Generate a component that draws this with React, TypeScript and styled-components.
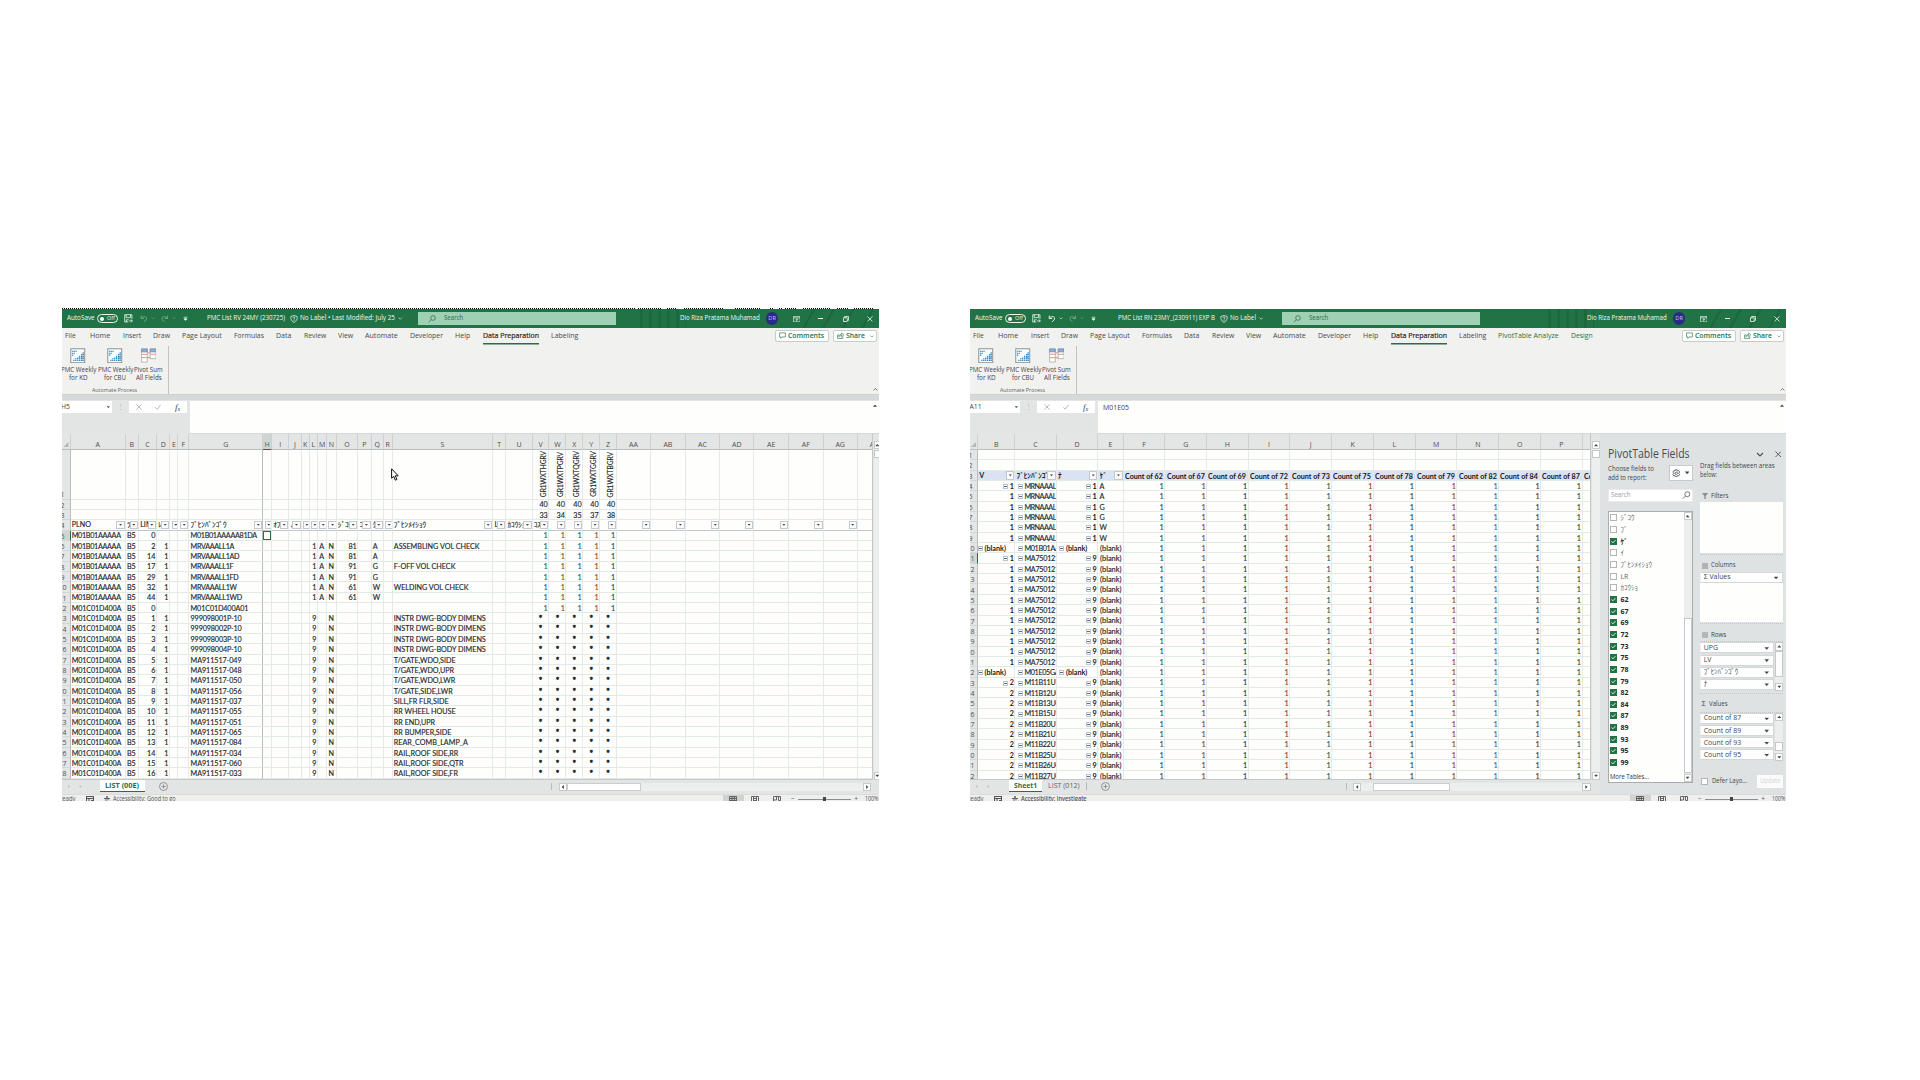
import React, { useLayoutEffect, useRef, useState } from 'react';
import styled, { createGlobalStyle, css } from 'styled-components';

const UI = `"Open Sans", "Noto Sans", "Noto Sans CJK JP", sans-serif`;
const CELL = `Lato, "Open Sans", "Noto Sans CJK JP", sans-serif`;

const Global = createGlobalStyle`
  * { box-sizing: border-box; }
  html, body { margin: 0; background: #fff; }
  body { width: 1920px; height: 1080px; overflow: hidden; font-family: ${UI}; font-size: 7.4px; line-height: 1; color: #444; }
`;

const Stage = styled.main`
  display: flex;
  gap: 91px;
  align-items: flex-start;
  padding: 308px 0 0 62px;
  height: 1080px;
`;

const Window = styled.section<{ $w: number; $top: number }>`
  flex: 0 0 ${p => p.$w}px;
  height: ${p => 493 - p.$top}px;
  margin-top: ${p => p.$top}px;
  overflow: hidden;
  display: flex;
  flex-direction: column;
  background: #e3e5e5;
  position: relative;
`;

/* ---------- text stretched to a known width ---------- */
const FitSpan = styled.span`
  display: inline-block;
  white-space: nowrap;
  transform-origin: 0 50%;
`;
const FitBox = styled.span<{ $w: number }>`
  display: block;
  flex: none;
  width: ${p => p.$w}px;
  white-space: nowrap;
`;
function Fit({ w, children }: { w: number; children: React.ReactNode }) {
  const ref = useRef<HTMLSpanElement>(null);
  const [k, setK] = useState(1);
  useLayoutEffect(() => {
    const n = ref.current?.getBoundingClientRect().width;
    if (n) setK(w / n);
  }, [w]);
  return (
    <FitBox $w={w}>
      <FitSpan ref={ref} style={{ transform: `scaleX(${k})` }}>{children}</FitSpan>
    </FitBox>
  );
}

/* ---------- title bar ---------- */
const DotLine = styled.div`
  display: flex;
  flex: 0 0 1px;
  height: 1px;
  background: #fff;
`;
const Dots = styled.i<{ $w: number; $gap: number }>`
  flex: 0 0 ${p => p.$w}px;
  margin-left: ${p => p.$gap}px;
  height: 1px;
  background: repeating-linear-gradient(90deg, #000 0 1px, #fff 1px 2px);
`;
const TitleBar = styled.header`
  flex: 0 0 18.5px;
  display: flex;
  align-items: center;
  padding-top: .8px;
  color: #f1faf5;
  font-size: 6.9px;
  background:
    repeating-linear-gradient(120deg, transparent 0 9px, rgba(10, 70, 38, .28) 9px 11px, transparent 11px 17px) right / 76px 100% no-repeat,
    repeating-linear-gradient(90deg, transparent 0 6px, rgba(10, 70, 38, .22) 6px 9px) 572px 0 / 52px 100% no-repeat,
    #217346;
`;
const Slot = styled.span<{ $l: number; $w?: number; $dim?: boolean }>`
  flex: 0 0 ${p => (p.$w ? `${p.$w}px` : 'auto')};
  margin-left: ${p => p.$l}px;
  display: flex;
  align-items: center;
  justify-content: center;
  opacity: ${p => (p.$dim ? 0.4 : 1)};
  svg { display: block; width: 100%; }
`;
const Toggle = styled.span`
  width: 21px;
  height: 8.6px;
  border: 1px solid #e9f5ee;
  border-radius: 5px;
  display: flex;
  align-items: center;
  gap: 3px;
  padding-left: 2px;
  font-size: 5.4px;
  &::before { content: ''; width: 4px; height: 4px; border-radius: 50%; background: #fff; }
`;
const SearchBox = styled.span<{ $l: number; $w: number }>`
  flex: 0 0 ${p => p.$w}px;
  margin-left: ${p => p.$l}px;
  height: 13.4px;
  background: #9fd0b3;
  color: #2b6b47;
  display: flex;
  align-items: center;
  svg { width: 8px; margin: 0 8px 0 10.6px; }
`;
const Avatar = styled.span`
  width: 12.4px;
  height: 12.4px;
  border-radius: 50%;
  background: #2b2a86;
  color: #c9c6ee;
  font-size: 5.6px;
  display: flex;
  align-items: center;
  justify-content: center;
`;

const line = { fill: 'none', stroke: 'currentColor', strokeWidth: 1.1 } as const;
const Chevron = () => <svg viewBox="0 0 8 5" {...line}><path d="M1 1l3 3 3-3" /></svg>;
const SaveIcon = () => (
  <svg viewBox="0 0 12 12" {...line}><path d="M1 1h10v6M1 1v10h5M3 1v4h6V1M3.5 11V8h3M7 9.5h4.5M9.5 7.5l2 2-2 2" /></svg>
);
const UndoIcon = () => <svg viewBox="0 0 12 12" {...line} strokeWidth={1.5}><path d="M2 1v4.5h4.5M2 5.500C4 2 10 1.500 10.500 5c.3 2.500-2 4-4.500 6.500" /></svg>;
const RedoIcon = () => <svg viewBox="0 0 12 12" {...line} strokeWidth={1.5}><path d="M10 1v4.5H5.500M10 5.500C8 2 2 1.500 1.500 5c-.3 2.500 2 4 4.500 6.500" /></svg>;
const CustomizeIcon = () => <svg viewBox="0 0 8 8" {...line}><path d="M1 2h6M1.500 4.500h5L4 7z" fill="currentColor" /></svg>;
const ShieldIcon = () => (
  <svg viewBox="0 0 12 12" {...line}><path d="M6 .8l4.800 1.400c.3 4-1 7-4.800 9C2.200 9.200.9 6.200 1.200 2.200z" /><path d="M4.300 4.300c.5-1.600 3.400-1.300 3.200.2C7.300 5.500 6 5.500 6 7M6 8v1" /></svg>
);
const LensIcon = () => <svg viewBox="0 0 12 12" {...line}><circle cx="7.500" cy="4.500" r="3.500" /><path d="M5 7l-4 4" /></svg>;
const RibbonIcon = () => <svg viewBox="0 0 12 10" {...line}><path d="M.6.6h10.800v8.800H.6zM.6 3h10.800M6 8.500V4.600M4 6.300l2-1.800 2 1.800" /></svg>;
const MinIcon = () => <svg viewBox="0 0 8 8" {...line}><path d="M0 4h8" strokeWidth={1.5} /></svg>;
const RestoreIcon = () => <svg viewBox="0 0 8 8" {...line}><path d="M.6 2.400h5v5h-5zM2.200 2.200V.6h5.200v5.200H5.800" /></svg>;
const CloseIcon = () => <svg viewBox="0 0 8 8" {...line}><path d="M.5.5l7 7M7.500.5l-7 7" /></svg>;

interface Doc {
  title: string; titleW: number; titleL: number;
  label: string; labelW: number;
  searchL: number; nameL: number; undo: boolean;
}
function Title({ d }: { d: Doc }) {
  return (
    <TitleBar>
      <Slot $l={4.7}><Fit w={27.6}>AutoSave</Fit></Slot>
      <Slot $l={2.7} $w={21}><Toggle>Off</Toggle></Slot>
      <Slot $l={6.3} $w={8.7}><SaveIcon /></Slot>
      <Slot $l={7} $w={7.500} $dim={!d.undo}><UndoIcon /></Slot>
      <Slot $l={4} $w={4} $dim={!d.undo}><Chevron /></Slot>
      <Slot $l={5.5} $w={7.700} $dim><RedoIcon /></Slot>
      <Slot $l={3} $w={4} $dim><Chevron /></Slot>
      <Slot $l={7} $w={5}><CustomizeIcon /></Slot>
      <Slot $l={d.titleL}><Fit w={d.titleW}>{d.title}</Fit></Slot>
      <Slot $l={4.8} $w={8}><ShieldIcon /></Slot>
      <Slot $l={2.2}><Fit w={d.labelW}>{d.label}</Fit></Slot>
      <Slot $l={3} $w={4.500}><Chevron /></Slot>
      <SearchBox $l={d.searchL} $w={198.500}><LensIcon /><Fit w={19.300}>Search</Fit></SearchBox>
      <Slot $l={d.nameL}><Fit w={79.700}>Dio Riza Pratama Muhamad</Fit></Slot>
      <Slot $l={6} $w={12.4}><Avatar>DR</Avatar></Slot>
      <Slot $l={14.500} $w={7.500}><RibbonIcon /></Slot>
      <Slot $l={18} $w={5}><MinIcon /></Slot>
      <Slot $l={19.700} $w={6}><RestoreIcon /></Slot>
      <Slot $l={18.200} $w={5.800}><CloseIcon /></Slot>
    </TitleBar>
  );
}

/* ---------- ribbon ---------- */
const TabRow = styled.nav`
  flex: 0 0 17px;
  display: flex;
  align-items: center;
  gap: 12.1px;
  padding-left: 2.6px;
  background: #f1f1f0;
  font-size: 7.6px;
  color: #4a4a4a;
`;
const Tab = styled.span<{ $active?: boolean; $green?: boolean; $first?: boolean }>`
  height: 13.5px;
  display: flex;
  align-items: center;
  ${p => p.$first && css`padding-right: 3px;`}
  ${p => p.$green && css`color: #217346;`}
  ${p => p.$active && css`color: #262626; -webkit-text-stroke: .2px #262626; box-shadow: 0 1.500px #217346;`}
`;
const TabButtons = styled.span`
  margin-left: auto;
  display: flex;
  gap: 4.3px;
  padding-right: 2.3px;
`;
const OutlineButton = styled.span<{ $w: number }>`
  width: ${p => p.$w}px;
  height: 12.3px;
  background: #fff;
  border: 1px solid #c9cdca;
  border-radius: 2px;
  color: #217346;
  font-weight: 600;
  font-size: 7.2px;
  display: flex;
  align-items: center;
  padding-left: 3px;
  gap: 2.200px;
  svg { width: 7px; flex: none; }
  svg:last-child { width: 4px; margin-left: 3px; }
`;
const TABS: [string, number][] = [
  ['File', 10.7], ['Home', 20.3], ['Insert', 18.3], ['Draw', 17], ['Page Layout', 39.7], ['Formulas', 30],
  ['Data', 15.3], ['Review', 22.3], ['View', 15.3], ['Automate', 32.7], ['Developer', 33], ['Help', 15.3],
  ['Data Preparation', 56], ['Labeling', 27.4],
];
function Tabs({ extra }: { extra?: boolean }) {
  return (
    <TabRow>
      {TABS.map(([t, w], i) => <Tab key={t} $first={i === 0} $active={t === 'Data Preparation'}><Fit w={w}>{t}</Fit></Tab>)}
      {extra && <Tab $green><Fit w={60.6}>PivotTable Analyze</Fit></Tab>}
      {extra && <Tab $green><Fit w={21.6}>Design</Fit></Tab>}
      <TabButtons>
        <OutlineButton $w={54.300}>
          <svg viewBox="0 0 12 12" {...line}><path d="M1 1.500h10v7H5L3 10.800V8.500H1z" /></svg>
          <Fit w={36}>Comments</Fit>
        </OutlineButton>
        <OutlineButton $w={43.600}>
          <svg viewBox="0 0 12 12" {...line}><path d="M3.500 5H1v6h9V8M3 8c.5-3 2.500-4 5-4V1.500l3.500 3.500L8 8.200V6C6 6 4.500 6.500 3 8z" /></svg>
          <Fit w={19}>Share</Fit>
          <Chevron />
        </OutlineButton>
      </TabButtons>
    </TabRow>
  );
}

const RibbonBox = styled.div`
  flex: 0 0 50.5px;
  display: flex;
  background: #f1f1f0;
  border-bottom: 1px solid #cfd1d2;
`;
const Group = styled.div`
  width: 108px;
  height: 48px;
  margin-left: -1.3px;
  margin-top: 1px;
  border-right: 1px solid #c2c3c4;
  display: flex;
  flex-direction: column;
  align-items: center;
`;
const BigButtons = styled.div`
  display: flex;
  align-self: flex-start;
  gap: 1.500px;
`;
const BigButton = styled.div`
  display: flex;
  flex-direction: column;
  align-items: center;
  font-size: 6.900px;
  line-height: 8.700px;
  svg { width: 15.500px; height: 15.500px; margin: 2px .8px 2.500px 0; }
`;
const GroupName = styled.div`
  font-size: 5.8px;
  color: #5c5c5c;
  margin-top: 5.200px;
`;
const CollapseMark = styled.span`
  margin: 41.500px 1.500px 0 auto;
  width: 5px;
  transform: scaleY(-1);
  height: 5px;
  svg { display: block; }
`;
const MacroIcon = () => (
  <svg viewBox="0 0 16 16">
    <rect x=".8" y=".8" width="14.400" height="14.400" fill="#fafcfd" stroke="#8b8f93" />
    <path d="M2 3.500h5M2 5.500h3M2 7.500h1.500" stroke="#4c9fd0" strokeWidth="1.400" strokeDasharray="1.400 .4" />
    <path d="M4 13.500v-2M6 13.500v-3M8 13.500v-4M10 13.500v-6M12 13.500V6M13.600 13.500V4" stroke="#2f86c3" strokeWidth="1.300" strokeDasharray="1.500 .4" />
  </svg>
);
const PivotIcon = () => (
  <svg viewBox="0 0 16 16" fill="none">
    <path d="M.5 1h6v13.500h-6z" fill="#fff" stroke="#a9a9a9" strokeWidth=".8" />
    <path d="M9.500 1h6v10h-6z" fill="#fff" stroke="#a9a9a9" strokeWidth=".8" />
    <path d="M.5 1h6v3h-6zM9.500 1h6v3h-6z" fill="#8fb0d6" stroke="#6f8fb8" strokeWidth=".8" />
    <path d="M.8 6.500h5.500M.8 10h5.500M9.800 6.500h5.500" stroke="#d58a6c" strokeWidth=".9" />
    <path d="M6.500 5h3M6.500 10h3" stroke="#d58a6c" strokeWidth=".9" />
  </svg>
);
function Ribbon() {
  return (
    <RibbonBox>
      <Group>
        <BigButtons>
          <BigButton><MacroIcon /><Fit w={35.400}>PMC Weekly</Fit><Fit w={18.600}>for KD</Fit></BigButton>
          <BigButton><MacroIcon /><Fit w={35.400}>PMC Weekly</Fit><Fit w={21.800}>for CBU</Fit></BigButton>
          <BigButton><PivotIcon /><Fit w={28.600}>Pivot Sum</Fit><Fit w={25.800}>All Fields</Fit></BigButton>
        </BigButtons>
        <GroupName><Fit w={45}>Automate Process</Fit></GroupName>
      </Group>
      <CollapseMark><Chevron /></CollapseMark>
    </RibbonBox>
  );
}

/* ---------- formula bar ---------- */
const FormulaRow = styled.div`
  flex: 0 0 39px;
  display: flex;
  padding-top: 6px;
  background: linear-gradient(#d6d8da 0 5px, #e3e5e5 5px);
`;
const NameBox = styled.div`
  flex: 0 0 50px;
  height: 12px;
  background: #fff;
  display: flex;
  align-items: center;
  justify-content: space-between;
  padding-right: 2px;
  font-size: 6.900px;
  overflow: hidden;
`;
const NameText = styled.span<{ $shift: number }>`margin-left: ${p => p.$shift}px;`;
const Grip = styled.div`
  flex: 0 0 17px;
  height: 12px;
  display: flex;
  align-items: center;
  justify-content: center;
  color: #a5a8a8;
`;
const FxBox = styled.div`
  flex: 0 0 58px;
  height: 12px;
  background: #fff;
  display: flex;
  align-items: center;
  justify-content: space-around;
  color: #a9acac;
  svg { width: 6px; }
`;
const Fx = styled.em`
  font: italic 400 9px "Liberation Serif", serif;
  color: #444;
  sub { font-size: 6px; vertical-align: -1px; }
`;
const FormulaText = styled.div`
  flex: 1;
  margin-left: 3px;
  height: 33px;
  background: #fefefd;
  padding: 2.800px 2px 0 5px;
  font-size: 7px;
  display: flex;
  justify-content: space-between;
  border-bottom: 1px solid #d4d7d7;
`;
const Tri = styled.i<{ $dir: 'up' | 'down' | 'left' | 'right'; $s?: number; $soft?: boolean }>`
  flex: none;
  width: ${p => (p.$s ?? 2) * 2}px;
  height: ${p => (p.$s ?? 2) * 2}px;
  background: ${p => (p.$soft ? '#b3b7b7' : '#444')};
  clip-path: ${p => ({
    up: 'polygon(0 75%, 100% 75%, 50% 20%)',
    down: 'polygon(0 25%, 100% 25%, 50% 80%)',
    left: 'polygon(75% 0, 75% 100%, 20% 50%)',
    right: 'polygon(25% 0, 25% 100%, 80% 50%)',
  }[p.$dir])};
`;
function Formula({ name, shift, value }: { name: string; shift: number; value: string }) {
  return (
    <FormulaRow>
      <NameBox><NameText $shift={shift}>{name}</NameText><Tri $dir="down" $s={1.700} /></NameBox>
      <Grip>⋮</Grip>
      <FxBox><CloseIcon /><svg viewBox="0 0 8 8" {...line}><path d="M.5 4.500l2.500 2.500 4.500-6" /></svg><Fx>f<sub>x</sub></Fx></FxBox>
      <FormulaText><Fit w={value ? 26 : 0}>{value}</Fit><Tri $dir="up" /></FormulaText>
    </FormulaRow>
  );
}

/* ---------- grid ---------- */
const Body = styled.div`
  flex: 0 0 359.500px;
  display: flex;
  background: #e3e5e5;
`;
const SheetSide = styled.div<{ $w?: number }>`
  flex: ${p => (p.$w ? `0 0 ${p.$w}px` : '1')};
  display: flex;
  flex-direction: column;
  min-width: 0;
`;
const GridAndScroll = styled.div`
  flex: 0 0 346px;
  display: flex;
  overflow: hidden;
`;
const Grid = styled.div<{ $w: number }>`
  flex: 0 0 ${p => p.$w}px;
  overflow: hidden;
  background: #fefefd;
  border-right: 1px solid #c3c8c8;
  border-bottom: 1px solid #c3c8c8;
  display: flex;
  flex-direction: column;
`;
const Row = styled.div<{ $h: number; $tint?: boolean }>`
  flex: 0 0 ${p => p.$h}px;
  display: flex;
  background: ${p => (p.$tint ? '#dae3f3' : 'transparent')};
`;
const HeadCell = styled.div<{ $w: number; $sel?: boolean; $cut?: boolean }>`
  flex: 0 0 ${p => p.$w}px;
  display: flex;
  align-items: center;
  justify-content: ${p => (p.$cut ? 'flex-start' : 'center')};
  padding-top: 6px;
  padding-left: ${p => (p.$cut ? 12 : 0)}px;
  overflow: hidden;
  font-size: 7px;
  color: ${p => (p.$sel ? '#217346' : '#4d4d4d')};
  background: ${p => (p.$sel ? '#d0d4d2' : '#e4e6e6')};
  border-right: 1px solid #cdd1d1;
  border-bottom: 1px solid ${p => (p.$sel ? '#217346' : '#b9bdbd')};
`;
const Corner = styled(HeadCell)`
  justify-content: flex-end;
  padding: 6px 1px 0 0;
  &::after { content: ''; width: 5px; height: 5px; background: #b4b8b8; clip-path: polygon(100% 0, 100% 100%, 0 100%); }
`;
const RowHead = styled.div<{ $w: number; $sel?: boolean }>`
  flex: 0 0 ${p => p.$w}px;
  overflow: hidden;
  display: flex;
  align-items: flex-end;
  padding-bottom: .3px;
  font-size: 7px;
  color: ${p => (p.$sel ? '#217346' : '#4d4d4d')};
  background: ${p => (p.$sel ? '#d0d4d2' : '#e4e6e6')};
  border-right: 1px solid ${p => (p.$sel ? '#217346' : '#b9bdbd')};
  border-bottom: 1px solid #d3d6d6;
  span { flex: none; width: 15px; margin-left: -7px; text-align: center; }
`;
const Cell = styled.div<{ $w: number; $right?: boolean; $center?: boolean; $bold?: boolean; $c?: string; $frozen?: boolean; $strong?: boolean; $sel?: boolean; $pad?: number; $tight?: number; $plain?: boolean; $star?: boolean }>`
  flex: 0 0 ${p => p.$w}px;
  min-width: 0;
  overflow: hidden;
  display: flex;
  align-items: center;
  justify-content: ${p => (p.$right ? 'flex-end' : p.$center ? 'center' : 'flex-start')};
  padding: ${p => (p.$plain ? 0 : 1.600)}px ${p => (p.$right ? p.$pad ?? 0.6 : 0)}px 0 ${p => (p.$right ? 0 : p.$center ? 0 : p.$pad ?? 1.200)}px;
  white-space: nowrap;
  font-family: ${CELL};
  font-size: 7.200px;
  letter-spacing: ${p => -(p.$tight ?? 0)}px;
  font-weight: ${p => (p.$bold ? 700 : 400)};
  color: ${p => p.$c ?? '#25292d'};
  -webkit-text-stroke: ${p => (p.$star ? 0.6 : p.$bold ? 0 : 0.15)}px currentColor;
  border-right: 1px solid ${p => (p.$frozen ? '#b9bdbd' : '#e6eae8')};
  border-bottom: 1px solid ${p => (p.$strong ? '#c4c9c8' : '#e2eae6')};
  ${p => p.$sel && css`box-shadow: inset 0 0 0 1px #217346;`}
`;
const Clip = styled.span`
  flex: 1 1 0;
  min-width: 0;
  overflow: hidden;
  white-space: nowrap;
  line-height: 9px;
`;
const FilterBox = styled.i`
  flex: 0 0 8.300px;
  height: 8.300px;
  margin-left: auto;
  background: #fbfbfc;
  border: 1px solid #c3c8d2;
  display: flex;
  align-items: center;
  justify-content: center;
`;
const Turned = styled.span`
  flex: none;
  writing-mode: vertical-rl;
  transform: rotate(180deg);
  font-size: 6.700px;
  letter-spacing: -.06px;
  white-space: nowrap;
  margin-left: 5px;
`;
const Minus = styled.i`
  flex: 0 0 5px;
  height: 5px;
  margin-right: 1.500px;
  border: 1px solid #b9c4d4;
  background: linear-gradient(#5b6f8c, #5b6f8c) center / 3px 1px no-repeat #fff;
`;
const ScrollV = styled.div<{ $w: number; $gap: number }>`
  flex: 0 0 ${p => p.$w}px;
  margin-left: ${p => p.$gap}px;
  padding-top: 7px;
  display: flex;
  flex-direction: column;
  background: linear-gradient(#e3e5e5 7px, #ecefee 7px);
`;
const ScrollButton = styled.i<{ $end?: boolean }>`
  flex: 0 0 8.300px;
  min-width: 7.500px;
  background: #fff;
  border: 1px solid #c7cbcb;
  display: flex;
  align-items: center;
  justify-content: center;
  margin-top: ${p => (p.$end ? 'auto' : 0)};
`;
const Thumb = styled.i<{ $h: number; $top?: number }>`
  flex: 0 0 ${p => p.$h}px;
  margin-top: ${p => p.$top ?? 0}px;
  background: #fff;
  border: 1px solid #c3c8c8;
`;
const VScroll = ({ w, gap }: { w: number; gap: number }) => (
  <ScrollV $w={w} $gap={gap}>
    <ScrollButton><Tri $dir="up" /></ScrollButton>
    <Thumb $h={8} $top={1} />
    <ScrollButton $end><Tri $dir="down" /></ScrollButton>
  </ScrollV>
);

const widths = (edges: number[]) => edges.slice(1).map((e, i) => Math.round((e - edges[i]) * 100) / 100);
const L_EDGES = [70.5, 125.7, 139, 157, 170.4, 178.5, 189.4, 263.5, 272, 289.4, 301.7, 309.7, 318, 327.3, 336.7, 358.4, 371.7, 384, 392.7, 493.4, 506.4, 532.7, 549.5, 566.6, 583.3, 600.3, 617, 651.4, 685.7, 720.6, 754.4, 789.3, 823.7, 858, 873];
const L_W = widths(L_EDGES);
const L_COLS = 'A B C D E F G H I J K L M N O P Q R S T U V W X Y Z AA AB AC AD AE AF AG AH'.split(' ');
const FILTER_TEXT: Record<string, string> = { A: 'PLNO', B: 'ﾗｲﾝ', C: 'LINE', D: 'ﾚﾍﾞ', F: 'ﾖｳ', G: 'ﾌﾞﾋﾝﾊﾞﾝｺﾞｳ', I: 'ｵﾌﾟｼｮ', J: 'ﾉｳ', O: 'ｼﾞｺｳ', P: 'ｺｳ', Q: 'ｸﾐ', S: 'ﾌﾞﾋﾝﾒｲｼｮｳ', T: 'LR', U: 'ｶｺｳｼｮ', V: 'ｺｽﾄ' };
const VZ = ['V', 'W', 'X', 'Y', 'Z'];
const ONE_COLORS: Record<string, string> = { V: '#1f5c70', W: '#8a4634', X: '#1f5c70', Y: '#9a4226', Z: '#1c5266' };
const RIGHT_COLS = new Set(['C', 'D', 'L', 'O', ...VZ]);

type Rec = Record<string, string>;
const first: Rec[] = ([
  ['0', '', 'M01B01AAAAA81DA', '', '', ''],
  ['2', '1', 'MRVAAALL1A', '81', 'A', 'ASSEMBLING VOL CHECK'],
  ['14', '1', 'MRVAAALL1AD', '81', 'A', ''],
  ['17', '1', 'MRVAAALL1F', '91', 'G', 'F-OFF VOL CHECK'],
  ['29', '1', 'MRVAAALL1FD', '91', 'G', ''],
  ['32', '1', 'MRVAAALL1W', '61', 'W', 'WELDING VOL CHECK'],
  ['44', '1', 'MRVAAALL1WD', '61', 'W', ''],
] as string[][]).map(([C, D, G, O, Q, S]) => ({ A: 'M01B01AAAAA', B: 'B5', C, D, G, O, Q, S, ...(D ? { L: '1', M: 'A', N: 'N' } : {}), V: '1', W: '1', X: '1', Y: '1', Z: '1' }));
const second: Rec[] = ([
  ['999098001P-10', 'INSTR DWG-BODY DIMENS'], ['999098002P-10', 'INSTR DWG-BODY DIMENS'],
  ['999098003P-10', 'INSTR DWG-BODY DIMENS'], ['999098004P-10', 'INSTR DWG-BODY DIMENS'],
  ['MA911517-049', 'T/GATE,WDO,SIDE'], ['MA911517-048', 'T/GATE,WDO,UPR'], ['MA911517-050', 'T/GATE,WDO,LWR'],
  ['MA911517-056', 'T/GATE,SIDE,LWR'], ['MA911517-037', 'SILL,FR FLR,SIDE'], ['MA911517-055', 'RR WHEEL HOUSE'],
  ['MA911517-051', 'RR END,UPR'], ['MA911517-065', 'RR BUMPER,SIDE'], ['MA911517-084', 'REAR_COMB_LAMP_A'],
  ['MA911517-034', 'RAIL,ROOF SIDE,RR'], ['MA911517-060', 'RAIL,ROOF SIDE,QTR'], ['MA911517-033', 'RAIL,ROOF SIDE,FR'],
] as string[][]).map(([G, S], i) => ({ A: 'M01C01D400A', B: 'B5', C: String(i + 1), D: '1', G, L: '9', N: 'N', S, V: '*', W: '*', X: '*', Y: '*', Z: '*' }));
const L_DATA: Rec[] = [
  ...first,
  { A: 'M01C01D400A', B: 'B5', C: '0', G: 'M01C01D400A01', V: '1', W: '1', X: '1', Y: '1', Z: '1' },
  ...second,
];
const HEAD3: Rec = { V: '33', W: '34', X: '35', Y: '37', Z: '38' };
const TURNED: Rec = { V: 'GR1WXTHGRV', W: 'GR1WXTPGRV', X: 'GR1WXTQGRV', Y: 'GR1WXTGGRV', Z: 'GR1WXTBGRV' };
const tightness = (col: string, text = '') => {
  if (col !== 'A' && col !== 'G') return 0;
  return /AAA/.test(text) ? 0.3 : /^MA/.test(text) ? 0.06 : 0.12;
};
const ROW_H = 10.35;

function LeftGrid() {
  return (
    <Grid $w={810.500}>
      <Row $h={16}>
        <Corner $w={8.500} />
        {L_COLS.map((c, i) => <HeadCell key={c} $w={L_W[i]} $sel={c === 'H'} $cut={c === 'AH'}>{c}</HeadCell>)}
      </Row>
      <Row $h={49.500}>
        <RowHead $w={8.500}><span>1</span></RowHead>
        {L_COLS.map((c, i) => <Cell key={c} $w={L_W[i]} $center $plain $frozen={c === 'G'}>{TURNED[c] && <Turned>{TURNED[c]}</Turned>}</Cell>)}
      </Row>
      {[2, 3].map(r => (
        <Row key={r} $h={ROW_H}>
          <RowHead $w={8.500}><span>{r}</span></RowHead>
          {L_COLS.map((c, i) => <Cell key={c} $w={L_W[i]} $right $frozen={c === 'G'}>{VZ.includes(c) ? (r === 2 ? '40' : HEAD3[c]) : ''}</Cell>)}
        </Row>
      ))}
      <Row $h={ROW_H}>
        <RowHead $w={8.500}><span>4</span></RowHead>
        {L_COLS.map((c, i) => (
          <Cell key={c} $w={L_W[i]} $frozen={c === 'G'} $strong $plain>
            {FILTER_TEXT[c] && <Clip>{FILTER_TEXT[c]}</Clip>}
            {c !== 'AH' && <FilterBox><Tri $dir="down" $s={1.500} /></FilterBox>}
          </Cell>
        ))}
      </Row>
      {L_DATA.map((d, r) => (
        <Row key={r} $h={ROW_H}>
          <RowHead $w={8.500} $sel={r === 0}><span>{r + 5}</span></RowHead>
          {L_COLS.map((c, i) => (
            <Cell key={c} $w={L_W[i]} $frozen={c === 'G'} $sel={c === 'H' && r === 0} $tight={tightness(c, d[c])}
              $right={RIGHT_COLS.has(c) && d[c] !== '*'} $center={d[c] === '*'} $star={d[c] === '*'} $pad={c === 'D' ? 1 : undefined}
              $c={d[c] === '1' ? ONE_COLORS[c] : undefined} $bold={d[c] === '*'}>{d[c]}</Cell>
          ))}
        </Row>
      ))}
    </Grid>
  );
}

const R_EDGES = [978, 1015.4, 1056.7, 1098.4, 1123.6, 1165.4, 1207.3, 1248.7, 1290.4, 1332.3, 1374, 1415.7, 1457.6, 1499.3, 1541.3, 1582.7, 1591.5];
const R_W = widths(R_EDGES);
const R_COLS = ['B', 'C', 'D', 'E', 'F', 'G', 'H', 'I', 'J', 'K', 'L', 'M', 'N', 'O', 'P', ''];
const COUNTS = [62, 67, 69, 72, 73, 75, 78, 79, 82, 84, 87, 89];
const R_ONE = ['#1f4a70', '#84402a', '#243c5e', '#883d2a', '#1f6052', '#8c3f22', '#1a4c5e', '#8e4522', '#2a6cae', '#5a3326', '#1f5646', '#333'];
const R_HEAD = ['LV', 'ﾌﾞﾋﾝﾊﾞﾝｺﾞ', 'ﾅ', 'ｹﾞ'];
const R_DATA: [string, string, string, string][] = [
  ['-1', 'MRNAAAL1', '-1', 'A'], ['1', 'MRNAAAL1', '-1', 'A'], ['1', 'MRNAAAL1', '-1', 'G'],
  ['1', 'MRNAAAL1', '-1', 'G'], ['1', 'MRNAAAL1', '-1', 'W'], ['1', 'MRNAAAL1', '-1', 'W'],
  ['b', 'M01B01AA', 'b', '(blank)'],
  ['-1', 'MA750121', '-9', '(blank)'],
  ...Array.from({ length: 10 }, () => ['1', 'MA750121', '-9', '(blank)'] as [string, string, string, string]),
  ['b', 'M01E05GA', 'b', '(blank)'],
  ...['M11B11U1', 'M11B12U0', 'M11B13U0', 'M11B15U1', 'M11B20U1', 'M11B21U1', 'M11B22U1', 'M11B25U0', 'M11B26U0', 'M11B27U0']
    .map((c, i) => [i ? '2' : '-2', c, '-9', '(blank)'] as [string, string, string, string]),
];
function Level({ v, w }: { v: string; w: number }) {
  if (v === 'b') return <Cell $w={w} $bold $c="#161616" $pad={w > 40 ? 2.800 : 0}><Minus />(blank)</Cell>;
  return <Cell $w={w} $right $bold $c="#161616">{v[0] === '-' && <Minus />}{v.replace('-', '')}</Cell>;
}
function RightGrid() {
  return (
    <Grid $w={621}>
      <Row $h={16}>
        <Corner $w={8} />
        {R_COLS.map((c, i) => <HeadCell key={i} $w={R_W[i]}>{c}</HeadCell>)}
      </Row>
      {[1, 2].map(r => (
        <Row key={r} $h={ROW_H}>
          <RowHead $w={8}><span>{r}</span></RowHead>
          {R_COLS.map((c, i) => <Cell key={i} $w={R_W[i]} />)}
        </Row>
      ))}
      <Row $h={ROW_H} $tint>
        <RowHead $w={8}><span>3</span></RowHead>
        {R_HEAD.map((t, i) => <Cell key={t} $w={R_W[i]} $bold $plain $c="#222"><Clip>{i === 0 ? 'V' : t}</Clip><FilterBox><Tri $dir="down" $s={1.500} /></FilterBox></Cell>)}
        {COUNTS.map((n, i) => <Cell key={n} $w={R_W[i + 4]} $bold $c="#161616"><Fit w={37.800}>Count of {n}</Fit></Cell>)}
      </Row>
      {R_DATA.map(([b, c, d, e], r) => (
        <Row key={r} $h={ROW_H}>
          <RowHead $w={8} $sel={r === 7}><span>{r + 4}</span></RowHead>
          <Level v={b} w={R_W[0]} />
          <Cell $w={R_W[1]} $pad={2.500} $tight={c.startsWith('MRN') ? 0.5 : c.startsWith('MA') ? 0.25 : 0.32}><Minus />{c}</Cell>
          <Level v={d} w={R_W[2]} />
          <Cell $w={R_W[3]}>{e.length > 1 ? <Fit w={21.500}>{e}</Fit> : e}</Cell>
          {COUNTS.map((n, i) => <Cell key={n} $w={R_W[i + 4]} $right $c={R_ONE[i]}>{i < 11 ? '1' : ''}</Cell>)}
        </Row>
      ))}
    </Grid>
  );
}

/* ---------- sheet tabs and status bar ---------- */
const SheetBar = styled.div`
  flex: 1;
  display: flex;
  align-items: flex-start;
  color: #a2a6a6;
`;
const Nav = styled.span<{ $l: number }>`
  margin-left: ${p => p.$l}px;
  width: 4px;
  height: 13px;
  display: flex;
  align-items: center;
`;
const SheetTab = styled.span<{ $l: number; $w: number; $active?: boolean }>`
  margin-left: ${p => p.$l}px;
  flex: 0 0 ${p => p.$w}px;
  height: 11.600px;
  display: flex;
  align-items: center;
  justify-content: center;
  font-size: 7.200px;
  color: #5f6464;
  ${p => p.$active && css`background: #fff; color: #217346; font-weight: 700; border-bottom: 1px solid #217346;`}
`;
const Separator = styled.i<{ $l: number }>`
  margin: 2px 0 0 ${p => p.$l}px;
  width: 1px;
  height: 8px;
  background: #b4b8b8;
`;
const AddSheet = styled.span<{ $l: number }>`
  margin: 2px 0 0 ${p => p.$l}px;
  flex: 0 0 9px;
  svg { display: block; width: 9px; height: 9px; }
`;
const HScroll = styled.span<{ $w: number; $r: number; $thumbL: number; $thumbW: number }>`
  margin: 3px ${p => p.$r}px 0 auto;
  flex: 0 0 ${p => p.$w}px;
  height: 8px;
  display: flex;
  background: #ecefee;
  > :nth-child(2) { flex: 0 0 ${p => p.$thumbW}px; margin-left: ${p => p.$thumbL}px; background: #fff; border: 1px solid #c9cdcd; }
  > :last-child { margin: 0 0 0 auto; }
`;
const Splitter = styled.i<{ $r: number }>`
  margin: 3px ${p => p.$r}px 0 auto;
  width: 1px;
  height: 7px;
  background: #b9bdbd;
  & + span { margin-left: 0; }
`;
const Plus = () => <svg viewBox="0 0 9 9" fill="none" stroke="#7d8181" strokeWidth=".8"><circle cx="4.500" cy="4.500" r="4" /><path d="M4.500 2.500v4M2.500 4.500h4" /></svg>;

const Status = styled.footer`
  flex: 1 0 0;
  overflow: hidden;
  display: flex;
  align-items: flex-start;
  background: #efefee;
  border-top: 1px solid #dadcdc;
  font-size: 6.600px;
  color: #555;
`;
const Item = styled.span<{ $l: number; $w?: number; $on?: boolean; $bold?: boolean }>`
  margin-left: ${p => p.$l}px;
  flex: 0 0 ${p => (p.$w ? `${p.$w}px` : 'auto')};
  height: 10.200px;
  display: flex;
  align-items: center;
  justify-content: center;
  font-weight: ${p => (p.$bold ? 600 : 400)};
  background: ${p => (p.$on ? '#d0d3d0' : 'transparent')};
  svg { width: 8px; height: 7px; display: block; }
`;
const Slider = styled.span`
  width: 53.300px;
  height: 1px;
  background: #8b8e8e;
  display: flex;
  align-items: center;
  justify-content: center;
  &::before { content: ''; flex: none; width: 3px; height: 6px; background: #444; }
`;
const Spring = styled.span`margin-left: auto;`;
function StatusBar({ text, w, bold }: { text: string; w: number; bold?: boolean }) {
  return (
    <Status>
      <Item $l={-3.500}><Fit w={16.500}>Ready</Fit></Item>
      <Item $l={10.500} $w={8}><svg viewBox="0 0 8 7" {...line}><path d="M.5.5h7v6h-7zM.5 2.500h7M3 2.500v4M5 4.500h2" /></svg></Item>
      <Item $l={9.500} $w={7}><svg viewBox="0 0 8 7" {...line} strokeWidth={.9}><path d="M1 2.500h6M3 2.500v4M5 2.500v2M5 6l1 .8L8 4.500" /><circle cx="4" cy="1" r=".7" /></svg></Item>
      <Item $l={2.300} $bold={bold}><Fit w={w}>{text}</Fit></Item>
      <Spring />
      <Item $l={0} $w={21.300} $on><svg viewBox="0 0 8 7" {...line} strokeWidth={.9}><path d="M.5.5h7v6h-7zM.5 2.500h7M.5 4.500h7M3 .5v6M5.300.5v6" /></svg></Item>
      <Item $l={7.300} $w={8}><svg viewBox="0 0 8 7" {...line} strokeWidth={.9}><path d="M.5.5h7v6h-7zM2.500.5v6M5.500.5v6M2.500 2.500h3M2.500 4.500h3" /></svg></Item>
      <Item $l={13.500} $w={8}><svg viewBox="0 0 8 7" {...line} strokeWidth={.9}><path d="M.5 6.500v-6h7v4h-2v-4M.5 4h3v-3.500" /></svg></Item>
      <Item $l={10} $w={4}>−</Item>
      <Item $l={3} $w={53.300}><Slider /></Item>
      <Item $l={2.800} $w={4.400}>+</Item>
      <Item $l={6.600}><Fit w={13.300}>100%</Fit></Item>
      <Item $l={.8} />
    </Status>
  );
}

/* ---------- pivot pane ---------- */
const Pane = styled.aside`
  flex: 1;
  display: flex;
  flex-direction: column;
  padding: 10.500px 2.700px 0 8.400px;
  background: #dfe2e3;
  color: #3b4750;
  font-size: 6.900px;
`;
const PaneHead = styled.div`
  flex: 0 0 18px;
  display: flex;
  align-items: center;
  padding-top: 1px;
  font-size: 12.600px;
  color: #4a4d50;
  svg { width: 8px; display: block; }
  svg:first-of-type { margin-left: auto; }
  svg:last-of-type { width: 6.500px; margin: 0 2.300px 0 10.500px; }
`;
const PaneCols = styled.div`
  flex: 1;
  display: flex;
  gap: 7.200px;
`;
const ListCol = styled.div`
  flex: 0 0 84.200px;
  display: flex;
  flex-direction: column;
`;
const AreaCol = styled.div`
  flex: 1;
  display: flex;
  flex-direction: column;
`;
const ChooseRow = styled.div`
  display: flex;
  justify-content: space-between;
  margin-top: 2.500px;
  line-height: 8.700px;
`;
const GearButton = styled.span`
  width: 23.400px;
  height: 15.500px;
  background: #fff;
  border: 1px solid #c6caca;
  display: flex;
  align-items: center;
  justify-content: center;
  gap: 4px;
  svg { width: 8.500px; }
`;
const FieldSearch = styled.div`
  margin-top: 7px;
  height: 12.600px;
  background: #fff;
  border: 1px solid #e9ebeb;
  display: flex;
  align-items: center;
  justify-content: space-between;
  padding: 0 1px 0 2px;
  color: #9a9ea0;
  svg { width: 8.500px; color: #555; }
`;
const FieldBox = styled.div`
  margin-top: 9px;
  height: 272px;
  background: #fefefd;
  border: 1px solid #a9adad;
  display: flex;
`;
const Fields = styled.div`
  flex: 1;
  padding: 0 0 0 1px;
`;
const Field = styled.div<{ $bold?: boolean }>`
  height: 11.660px;
  display: flex;
  align-items: center;
  gap: 3px;
  font-size: 7px;
  color: ${p => (p.$bold ? '#26282a' : '#63676a')};
  font-weight: ${p => (p.$bold ? 700 : 400)};
`;
const Check = styled.i<{ $on?: boolean }>`
  flex: 0 0 7px;
  height: 7px;
  border: 1px solid ${p => (p.$on ? '#217346' : '#b2b6b6')};
  background: ${p => (p.$on ? '#217346' : '#fff')};
  display: flex;
  svg { width: 5px; color: #fff; }
`;
const More = styled.div`
  margin-top: 4.500px;
  color: #333;
  font-size: 7px;
`;
const SideScroll = styled.div<{ $h?: number }>`
  flex: 0 0 8px;
  ${p => p.$h && css`height: ${p.$h}px;`}
  display: flex;
  flex-direction: column;
  background: #eceeee;
`;
const Drag = styled.div`
  height: 20px;
  line-height: 8.800px;
  margin-top: -.4px;
`;
const AreaTitle = styled.div<{ $t: number }>`
  margin-top: ${p => p.$t}px;
  height: 12px;
  padding-left: 2px;
  display: flex;
  align-items: center;
  gap: 3.500px;
  svg { width: 6px; height: 6px; color: #8a8e90; }
`;
const Area = styled.div<{ $h: number; $clear?: boolean }>`
  flex: 0 0 ${p => p.$h}px;
  display: flex;
  gap: 1.300px;
  background: ${p => (p.$clear ? 'transparent' : '#fefefd')};
`;
const Chips = styled.div`
  flex: 1;
  display: flex;
  flex-direction: column;
  gap: 1.100px;
`;
const Chip = styled.div`
  height: 11px;
  flex: none;
  background: #fefefe;
  border: 1px solid #d3d7d7;
  border-left-color: #f0f0f0;
  display: flex;
  align-items: center;
  justify-content: space-between;
  padding: 1px 4px 0 3px;
`;
const Rule = styled.div<{ $t: number }>`
  margin-top: ${p => p.$t}px;
  border-top: 1px dotted #c2c6c8;
`;
const DeferRow = styled.div`
  margin-top: 13.500px;
  height: 13px;
  display: flex;
  align-items: center;
  padding-left: 1.500px;
`;
const DeferText = styled.span`margin: 0 auto 0 3.400px;`;
const UpdateButton = styled.span`
  width: 26.600px;
  height: 12.600px;
  background: #fbfbfb;
  color: #d3d7d7;
  display: flex;
  align-items: center;
  justify-content: center;
`;
const FIELDS: [string, boolean][] = [
  ['ｼﾞｺｳ', false], ['ﾌﾞ', false], ['ｹﾞ', true], ['ｲ', false], ['ﾌﾞﾋﾝﾒｲｼｮｳ', false], ['LR', false], ['ｶｺｳｼｮ', false],
  ...[62, 67, 69, 72, 73, 75, 78, 79, 82, 84, 87, 89, 93, 95, 99].map(n => [String(n), true] as [string, boolean]),
];
function ChipArea({ items, h, thumbTop, thumbH }: { items: string[]; h: number; thumbTop: number; thumbH: number }) {
  return (
    <Area $h={h} $clear>
      <Chips>{items.map(t => <Chip key={t}>{t}<Tri $dir="down" $s={2.300} /></Chip>)}</Chips>
      <SideScroll $h={h}>
        <ScrollButton><Tri $dir="up" /></ScrollButton>
        <Thumb $h={thumbH} $top={thumbTop} />
        <ScrollButton $end><Tri $dir="down" /></ScrollButton>
      </SideScroll>
    </Area>
  );
}
function PivotPane() {
  return (
    <Pane>
      <PaneHead><Fit w={81.600}>PivotTable Fields</Fit><Chevron /><CloseIcon /></PaneHead>
      <PaneCols>
        <ListCol>
          <ChooseRow>
            <div><Fit w={46}>Choose fields to</Fit><Fit w={38.600}>add to report:</Fit></div>
            <GearButton>
              <svg viewBox="0 0 12 12" {...line}><circle cx="6" cy="6" r="1.700" /><path d="M4.800 1h2.400l.5 1.700 1.700-.5 1.300 2L9.500 6l1.200 1.800-1.300 2-1.700-.5L7.200 11H4.800l-.5-1.700-1.700.5-1.300-2L2.500 6 1.300 4.200l1.300-2 1.700.5z" /></svg>
              <Tri $dir="down" $s={2.300} />
            </GearButton>
          </ChooseRow>
          <FieldSearch><Fit w={19.500}>Search</Fit><LensIcon /></FieldSearch>
          <FieldBox>
            <Fields>
              {FIELDS.map(([t, on]) => (
                <Field key={t} $bold={on}>
                  <Check $on={on}>{on && <svg viewBox="0 0 8 8" {...line} strokeWidth={1.500}><path d="M1 4l2 2 4-4" /></svg>}</Check>{t}
                </Field>
              ))}
              <More><Fit w={39}>More Tables...</Fit></More>
            </Fields>
            <SideScroll>
              <ScrollButton><Tri $dir="up" /></ScrollButton>
              <Thumb $h={155} $top={98} />
              <ScrollButton $end><Tri $dir="down" /></ScrollButton>
            </SideScroll>
          </FieldBox>
        </ListCol>
        <AreaCol>
          <Drag><Fit w={74.600}>Drag fields between areas</Fit><Fit w={17}>below:</Fit></Drag>
          <AreaTitle $t={8}><svg viewBox="0 0 6 6"><path d="M0 0h6L3.700 3v3H2.300V3z" fill="currentColor" /></svg><Fit w={17.600}>Filters</Fit></AreaTitle>
          <Area $h={50.500} />
          <Rule $t={1} />
          <AreaTitle $t={5.300}><svg viewBox="0 0 6 6" {...line}><path d="M1 0v6M3 0v6M5 0v6" /></svg><Fit w={24.600}>Columns</Fit></AreaTitle>
          <Area $h={50}>
            <Chips><Chip>Σ Values<Tri $dir="down" $s={2.300} /></Chip></Chips>
          </Area>
          <Rule $t={1} />
          <AreaTitle $t={5.500}><svg viewBox="0 0 6 6" {...line}><path d="M0 1h6M0 3h6M0 5h6" /></svg><Fit w={15.300}>Rows</Fit></AreaTitle>
          <Rule $t={0} />
          <ChipArea items={['UPG', 'LV', 'ﾌﾞﾋﾝﾊﾞﾝｺﾞｳ', 'ﾅ']} h={48.500} thumbTop={0.500} thumbH={26} />
          <Rule $t={2} />
          <AreaTitle $t={4.500}>Σ<Fit w={18.600}>Values</Fit></AreaTitle>
          <Rule $t={1.500} />
          <ChipArea items={['Count of 87', 'Count of 89', 'Count of 93', 'Count of 95']} h={48.500} thumbTop={21} thumbH={9} />
          <DeferRow><Check /><DeferText><Fit w={35}>Defer Layo...</Fit></DeferText><UpdateButton><Fit w={20.500}>Update</Fit></UpdateButton></DeferRow>
        </AreaCol>
      </PaneCols>
    </Pane>
  );
}

/* ---------- pointer drawn over the grid ---------- */
const Pointer = styled.svg`
  position: absolute;
  left: 329px;
  top: 160px;
  width: 8px;
  height: 13px;
`;

const LEFT: Doc = { title: 'PMC List RV 24MY (230725)', titleW: 78, titleL: 19.600, label: 'No Label • Last Modified: July 25', labelW: 95, searchL: 15, nameL: 64, undo: false };
const RIGHT: Doc = { title: 'PMC List RN 23MY_(230911) EXP B', titleW: 97, titleL: 22.300, label: 'No Label', labelW: 26, searchL: 18.500, nameL: 106.800, undo: true };

export default function App() {
  return (
    <>
      <Global />
      <Stage>
        <Window $w={817} $top={0}>
          <DotLine>
            {[[0, 573], [3, 24], [5, 10], [7, 40], [11, 25], [10, 3], [6, 3], [3, 12], [6, 27], [7, 12], [5, 20]].map(([g, w], i) => <Dots key={i} $gap={g} $w={w} />)}
          </DotLine>
          <Title d={LEFT} />
          <Tabs />
          <Ribbon />
          <Formula name="H5" shift={-1} value="" />
          <Body>
            <SheetSide>
              <GridAndScroll><LeftGrid /><VScroll w={7.500} gap={1} /></GridAndScroll>
              <SheetBar>
                <Nav $l={5}><Tri $dir="left" $s={1.500} $soft /></Nav>
                <Nav $l={8}><Tri $dir="right" $s={1.500} $soft /></Nav>
                <SheetTab $l={16.700} $w={45} $active><Fit w={34}>LIST (00E)</Fit></SheetTab>
                <AddSheet $l={14.300}><Plus /></AddSheet>
                <Splitter $r={7} />
                <HScroll $w={312.600} $r={7.700} $thumbL={0} $thumbW={73.600}>
                  <ScrollButton><Tri $dir="left" /></ScrollButton><i /><ScrollButton><Tri $dir="right" /></ScrollButton>
                </HScroll>
              </SheetBar>
            </SheetSide>
          </Body>
          <StatusBar text="Accessibility: Good to go" w={62.700} />
          <Pointer viewBox="0 0 8 13"><path d="M.6.8v9.400l2.100-1.900 1.600 3.900 1.600-.7-1.600-3.700h2.900z" fill="#fff" stroke="#111" strokeWidth="1" /></Pointer>
        </Window>
        <Window $w={816} $top={1}>
          <Title d={RIGHT} />
          <Tabs extra />
          <Ribbon />
          <Formula name="A11" shift={-0.500} value="M01E05" />
          <Body>
            <SheetSide $w={630}>
              <GridAndScroll><RightGrid /><VScroll w={7.800} gap={1.200} /></GridAndScroll>
              <SheetBar>
                <Nav $l={5}><Tri $dir="left" $s={1.500} $soft /></Nav>
                <Nav $l={8}><Tri $dir="right" $s={1.500} $soft /></Nav>
                <SheetTab $l={17.700} $w={33.300} $active><Fit w={23}>Sheet1</Fit></SheetTab>
                <SheetTab $l={0} $w={44}><Fit w={31.600}>LIST (012)</Fit></SheetTab>
                <Separator $l={0} />
                <AddSheet $l={14}><Plus /></AddSheet>
                <Splitter $r={6.500} />
                <HScroll $w={237.500} $r={9.500} $thumbL={12} $thumbW={76.600}>
                  <ScrollButton><Tri $dir="left" /></ScrollButton><i /><ScrollButton><Tri $dir="right" /></ScrollButton>
                </HScroll>
              </SheetBar>
            </SheetSide>
            <PivotPane />
          </Body>
          <StatusBar text="Accessibility: Investigate" w={65.600} bold />
        </Window>
      </Stage>
    </>
  );
}
